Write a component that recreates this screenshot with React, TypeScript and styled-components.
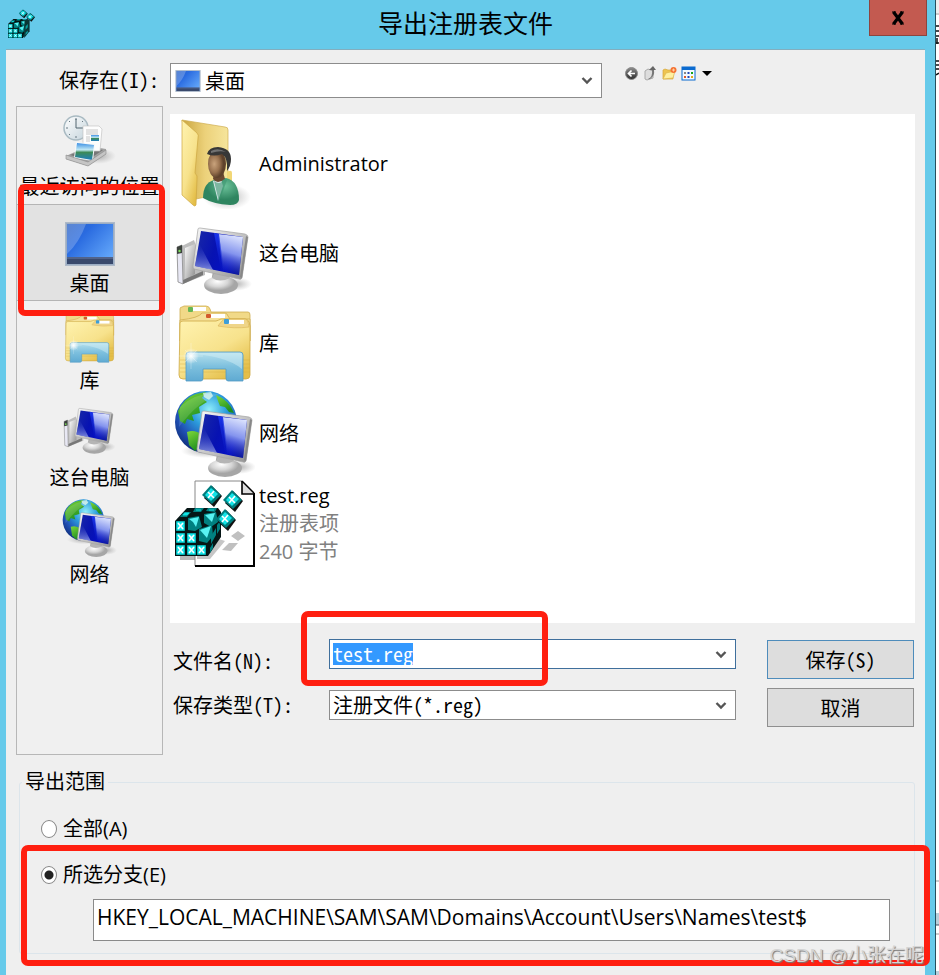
import React, { useEffect, useRef, useState } from "react";
import styled, { createGlobalStyle } from "styled-components";

const uiFont = `"Open Sans", "Noto Sans CJK SC", sans-serif`;
const songFont = `"Noto Sans Mono CJK SC", "Noto Sans CJK SC", monospace`;

const GlobalStyle = createGlobalStyle`
  * { box-sizing: border-box; }
  body { margin: 0; background: #fff; color: #000; font: 20px/28px ${uiFont}; }
  button, input, select { font: inherit; color: inherit; }
`;

const Screen = styled.div`
  display: flex;
  min-height: 100vh;
  position: relative;
  overflow: hidden;
`;

const Dialog = styled.main`
  flex: 1;
  display: flex;
  flex-direction: column;
  background: #66caea;
  border-right: 1px solid #24505f;
  padding: 0 10px 0 6px;
`;

const Behind = styled.svg`
  width: 3px;
  height: 975px;
  flex: none;
  display: block;
`;

const TitleBar = styled.header`
  display: grid;
  grid-template-columns: 58px 1fr 58px;
  height: 49px;
  align-items: start;
  svg { display: block; }
`;

const AppIcon = styled.span`
  padding: 9px 0 0 2px;
`;

const Title = styled.h1`
  margin: 0;
  font-size: 25px;
  line-height: 47px;
  font-weight: 400;
  text-align: center;
`;

const CloseButton = styled.button`
  width: 58px;
  height: 36px;
  margin-left: 2px;
  padding: 0;
  display: grid;
  place-items: center;
  background: #c35a50;
  border: 1px solid #8c453f;
  border-top: 0;
`;

const Body = styled.div`
  flex: 1;
  background: #efefef;
  border-top: 1px solid #83aebe;
  padding: 13px 10px 0;
`;

const AddressRow = styled.div`
  display: grid;
  grid-template-columns: 147px 24fr 17fr;
  column-gap: 7px;
  align-items: start;
`;

const AddressLabel = styled.label`
  font-family: ${songFont};
  line-height: 33px;
  text-align: right;
  padding-right: 4px;
`;

const ComboBox = styled.div<{ $tall?: boolean; $active?: boolean }>`
  position: relative;
  display: flex;
  align-items: center;
  height: ${(p) => (p.$tall ? 35 : 30)}px;
  background: #fff;
  border: 1px solid ${(p) => (p.$active ? "#3f6f9c" : "#8c8c8c")};
  padding-left: ${(p) => (p.$tall ? 4 : 3)}px;
  font-family: ${songFont};
  > svg { flex: none; }
`;

const Select = styled.select<{ $flush?: boolean }>`
  appearance: none;
  flex: 1;
  min-width: 0;
  height: 100%;
  border: 0;
  outline: 0;
  background: transparent;
  padding: 0 0 0 ${(p) => (p.$flush ? 0 : 4)}px;
`;

const NameInput = styled.input`
  flex: 1;
  min-width: 0;
  height: 22px;
  line-height: 22px;
  border: 0;
  outline: 0;
  padding: 0;
  background: transparent;
  &::selection { background: #3399ff; color: #fff; }
`;

const Chevron = styled.svg`
  width: 12px;
  height: 9px;
  margin: 0 8px 0 4px;
  pointer-events: none;
`;

const Tools = styled.div`
  display: flex;
  padding-left: 13px;
`;

const ToolButton = styled.button`
  width: 19px;
  height: 20px;
  padding: 0;
  border: 0;
  background: none;
  svg { display: block; margin: auto; }
`;

const Main = styled.div`
  display: grid;
  grid-template-columns: 147px 1fr;
  column-gap: 7px;
  margin-top: 8px;
`;

const Places = styled.nav`
  border: 1px solid #b7b7b7;
  background: #f0f0f0;
`;

const Place = styled.button<{ $selected?: boolean }>`
  position: relative;
  display: flex;
  flex-direction: column;
  align-items: center;
  width: 100%;
  height: 97px;
  padding: 8px 0 0;
  border: solid ${(p) => (p.$selected ? "#b5b5b5" : "transparent")};
  border-width: 1px 0;
  background: ${(p) => (p.$selected ? "#e2e2e2" : "transparent")};
  white-space: nowrap;
  line-height: 28px;
  > svg { flex: none; overflow: visible; }
`;

const Marker = styled.span<{ $box: string }>`
  position: absolute;
  inset: ${(p) => p.$box};
  border: 6px solid #ff1f10;
  border-radius: 7px;
  pointer-events: none;
  z-index: 2;
`;

const Content = styled.div`
  padding-top: 8px;
`;

const FileList = styled.ul`
  margin: 0;
  padding: 5px 5px 54px;
  list-style: none;
  background: #fff;
`;

const FileItem = styled.button`
  display: flex;
  align-items: center;
  gap: 4px;
  height: 90px;
  padding: 0;
  border: 0;
  background: none;
  text-align: left;
  > svg { flex: none; }
`;

const FileText = styled.span`
  display: grid;
`;

const FileMeta = styled.span`
  color: #808080;
`;

const SaveForm = styled.div`
  display: grid;
  grid-template-columns: 1fr 147px;
  column-gap: 31px;
  padding: 16px 1px 28px 3px;
`;

const Fields = styled.div`
  display: grid;
  grid-template-columns: 156px 1fr;
  align-items: start;
  align-content: start;
  row-gap: 21px;
`;

const FieldLabel = styled.label<{ $low?: boolean }>`
  font-family: ${songFont};
  line-height: 30px;
  padding-top: ${(p) => (p.$low ? 7 : 0)}px;
  margin-bottom: ${(p) => (p.$low ? -7 : 0)}px;
`;

const Actions = styled.div`
  display: grid;
  row-gap: 9px;
  padding-top: 1px;
  align-content: start;
`;

const ActionButton = styled.button<{ $primary?: boolean }>`
  height: 39px;
  padding: 0;
  background: #dddddd;
  border: 1px solid ${(p) => (p.$primary ? "#4e8cbb" : "#8f8f8f")};
  font-family: ${songFont};
`;

const Scope = styled.fieldset`
  position: relative;
  margin: 12px 0 0 3px;
  padding: 18px 24px 12px 21px;
  border: 1px solid #dce5eb;
  border-radius: 3px;
  legend { padding: 0 3px; line-height: 30px; margin-left: -19px; }
`;

const ScopeOption = styled.label`
  display: flex;
  align-items: center;
  gap: 6px;
  line-height: 28px;
  margin-bottom: 18px;
  & + & { margin-bottom: 10px; }
`;

const Radio = styled.input`
  appearance: none;
  width: 16px;
  height: 18px;
  margin: 0;
  border: 1px solid #868686;
  border-radius: 50%;
  background: #fff;
  &:checked { background: radial-gradient(circle, #222 0 4px, #fff 5px); }
`;

const BranchRow = styled.div`
  padding-left: 52px;
`;

const BranchInput = styled.input`
  display: block;
  width: 100%;
  height: 42px;
  border: 1px solid #8a8a8a;
  background: #fff;
  padding: 0 3px 6px;
  font-size: 21px;
`;

const Watermark = styled.div`
  position: absolute;
  right: 15px;
  bottom: 5px;
  z-index: 3;
  font: 19px/28px "Liberation Sans", "Noto Sans CJK SC", sans-serif;
  color: #d4d4d4;
  text-shadow: 1px 1px 1px #777;
`;

const GradientDefs = () => (
  <svg width="0" height="0" aria-hidden="true" display="block">
    <defs>
      <linearGradient id="gScreen" x1="0" y1="0.3" x2="1" y2="0.6">
        <stop offset="0" stopColor="#1726a8" /><stop offset=".4" stopColor="#0712b2" />
        <stop offset=".75" stopColor="#0510c4" /><stop offset="1" stopColor="#0a1484" />
      </linearGradient>
      <linearGradient id="gShine" x1=".8" y1="0" x2=".6" y2="1">
        <stop offset="0" stopColor="#e6ecff" /><stop offset=".5" stopColor="#8494ee" />
        <stop offset="1" stopColor="#0a18c0" stopOpacity=".3" />
      </linearGradient>
      <linearGradient id="gDim" x1="0" y1="0" x2="0" y2="1">
        <stop offset="0" stopColor="#2c3cc4" stopOpacity="0" /><stop offset="1" stopColor="#98a4e6" stopOpacity=".8" />
      </linearGradient>
      <linearGradient id="gBeam" x1="0" y1="0" x2="0" y2="1">
        <stop offset="0" stopColor="#1a36ee" /><stop offset="1" stopColor="#0c1cc0" stopOpacity=".2" />
      </linearGradient>
      <linearGradient id="gMetal" x1="0" y1="0" x2="1" y2="1">
        <stop offset="0" stopColor="#fafafa" /><stop offset=".5" stopColor="#c6c6c6" /><stop offset="1" stopColor="#8e8e8e" />
      </linearGradient>
      <radialGradient id="gBase" cx=".4" cy=".3">
        <stop offset="0" stopColor="#fff" /><stop offset=".6" stopColor="#d6d6d6" /><stop offset="1" stopColor="#a6a6a6" />
      </radialGradient>
      <radialGradient id="gShadow">
        <stop offset="0" stopColor="#777" stopOpacity=".6" /><stop offset="1" stopColor="#999" stopOpacity="0" />
      </radialGradient>
      <radialGradient id="gGlobe" cx=".55" cy=".3" r=".7">
        <stop offset="0" stopColor="#8eeefa" /><stop offset=".4" stopColor="#2c9cdc" />
        <stop offset=".75" stopColor="#2050b4" /><stop offset="1" stopColor="#10307e" />
      </radialGradient>
      <linearGradient id="gLand" x1="0" y1="0" x2=".5" y2="1">
        <stop offset="0" stopColor="#7ed83a" /><stop offset="1" stopColor="#1e8e1e" />
      </linearGradient>
      <linearGradient id="gFolder" x1="0" y1="0" x2=".7" y2="1">
        <stop offset="0" stopColor="#fff3b0" /><stop offset=".6" stopColor="#f7e28c" /><stop offset="1" stopColor="#e4be48" />
      </linearGradient>
      <linearGradient id="gBack" x1="0" y1="0" x2="1" y2="0">
        <stop offset="0" stopColor="#c9a53f" /><stop offset=".5" stopColor="#ecd17a" /><stop offset="1" stopColor="#f6e59c" />
      </linearGradient>
      <linearGradient id="gHolder" x1="0" y1="0" x2="0" y2="1">
        <stop offset="0" stopColor="#b9e2ee" /><stop offset=".5" stopColor="#7dc0de" /><stop offset="1" stopColor="#5faad2" />
      </linearGradient>
      <radialGradient id="gSpark">
        <stop offset="0" stopColor="#fff" /><stop offset="1" stopColor="#fff" stopOpacity="0" />
      </radialGradient>
      <radialGradient id="gFace" cx=".35" cy=".5">
        <stop offset="0" stopColor="#c9a37c" /><stop offset=".6" stopColor="#9a7350" /><stop offset="1" stopColor="#5f422c" />
      </radialGradient>
      <radialGradient id="gCoat" cx=".6" cy=".3">
        <stop offset="0" stopColor="#6cc29a" /><stop offset="1" stopColor="#2f8560" />
      </radialGradient>
      <linearGradient id="gDesk" x1="0" y1="0" x2="1" y2=".8">
        <stop offset="0" stopColor="#2b62c4" /><stop offset=".35" stopColor="#2a6be0" /><stop offset="1" stopColor="#64a8fa" />
      </linearGradient>
      <linearGradient id="gBall" x1="0" y1="0" x2="0" y2="1">
        <stop offset="0" stopColor="#8d8d8d" /><stop offset="1" stopColor="#2e2e2e" />
      </linearGradient>
      <linearGradient id="gClock" x1="0" y1="0" x2="1" y2="1">
        <stop offset="0" stopColor="#fff" /><stop offset="1" stopColor="#c4d4dc" />
      </linearGradient>
      <linearGradient id="gPhoto" x1="0" y1="0" x2="0" y2="1">
        <stop offset="0" stopColor="#3b8fe4" /><stop offset=".4" stopColor="#c2e9f5" />
        <stop offset=".55" stopColor="#3d8a56" /><stop offset="1" stopColor="#1f7fc0" />
      </linearGradient>
    </defs>
  </svg>
);

type IconProps = { width?: number; height?: number; viewBox?: string };
const frame = (p: IconProps) => ({
  width: p.width ?? 80,
  height: p.height ?? 90,
  viewBox: p.viewBox ?? "0 0 80 90",
  "aria-hidden": true as const,
});

const Monitor = () => (
  <g>
    <ellipse cx="60" cy="75" rx="17" ry="7" fill="url(#gShadow)" />
    <path d="M38 62L52 66L54 73H36Z" fill="#a9a9a9" />
    <ellipse cx="46" cy="76" rx="17" ry="9" fill="url(#gBase)" />
    <path d="M37 69Q45 74 55 69L53 65H39Z" fill="#b5b5b5" />
    <path d="M23 20Q23 19 25 19L70 25Q73 26 73 28L67 69Q66 71 64 70L19 60Q18 59 18 57Z" fill="url(#gMetal)" stroke="#a3a3a3" strokeWidth=".7" />
    <path d="M26 22L68 28L64 66L20 57Z" fill="url(#gScreen)" />
    <path d="M43 25L68 28L64 66L48 62Z" fill="url(#gShine)" />
    <path d="M24 34L38 61L20 57Z" fill="url(#gDim)" />
    <path d="M39 24L44 25L49 62L46 61Z" fill="url(#gBeam)" />
    <path d="M71 27L73 28L67 69L65 68Z" fill="#888" />
  </g>
);

const ComputerIcon = (p: IconProps) => (
  <svg {...frame(p)}>
    <path d="M7 37L19 31L30 62V66L8 75Z" fill="#bdbdbd" />
    <path d="M10 39L20 35V65L10 71Z" fill="url(#gMetal)" />
    <path d="M8 71L28 62V66L8 75Z" fill="#777" />
    <path d="M2 38L7 36L8 75L3 73Z" fill="#e8e8f4" stroke="#888" strokeWidth=".8" />
    <path d="M2 38L7 36V44L2 45Z" fill="#3d423d" />
    <circle cx="4.5" cy="42" r="1.2" fill="#7be05a" />
    <Monitor />
  </svg>
);

const NetworkIcon = (p: IconProps) => (
  <svg {...frame(p)}>
    <ellipse cx="32" cy="62" rx="26" ry="7" fill="url(#gShadow)" />
    <circle cx="31" cy="33" r="31" fill="url(#gGlobe)" />
    <g fill="url(#gLand)">
      <path d="M3 22Q10 8 21 5L31 3L27 9L32 13L24 18L25 24L17 26L19 32L12 30L10 35L5 32Z" />
      <path d="M12 43Q20 40 27 46L29 54L20 62L14 56Z" />
      <path d="M41 6Q54 11 59 24L54 23L50 18L45 17L43 12Z" />
    </g>
    <path d="M28 4L36 3L38 7L34 11L29 8Z" fill="#d8f6e8" opacity=".8" />
    <path d="M5 18Q22 2 45 5Q24 11 4 38Z" fill="#fff" opacity=".13" />
    <g transform="translate(4 3)"><Monitor /></g>
  </svg>
);

const LibraryIcon = (p: IconProps) => (
  <svg {...frame(p)}>
    <path d="M5 13V10Q5 8 7 8L9 7H31Q34 7 35 10L36 13H73Q75 13 75 16V42H5Z" fill="#f1d988" stroke="#cfad50" strokeWidth=".8" />
    <rect x="17" y="8" width="14" height="4" fill="#fff" /><rect x="13" y="8" width="5" height="5" rx="1" fill="#67b653" />
    <path d="M5 21Q24 19 27 14H50Q52 14 53 17L55 20H75V42H5Z" fill="#f5e19a" stroke="#cfad50" strokeWidth=".8" />
    <rect x="35" y="15" width="15" height="4" fill="#fff" /><rect x="31" y="15" width="5" height="4" rx="1" fill="#d45a2c" />
    <path d="M5 24Q5 22 8 22H41Q44 21 46 20H70Q73 20 74 23L75 27V76Q75 80 71 80H8Q4 80 4 76Z" fill="url(#gFolder)" stroke="#cda742" strokeWidth=".8" />
    <path d="M43 27Q48 20 50 20H70Q73 20 74 28Q60 30 43 27Z" fill="#efd588" stroke="#d8b456" strokeWidth=".6" />
    <rect x="53" y="21" width="16" height="4" fill="#fff" /><rect x="49" y="20" width="5" height="5" rx="1" fill="#3c9ed8" />
    <path d="M5 61H75M5 65H75M5 69H75M5 73H75" stroke="#d6ac3c" strokeWidth="1" opacity=".4" />
    <path d="M11 56Q11 53 14 53H65Q68 53 68 56V82H53Q51 82 51 79V70H28V79Q28 82 26 82H11Z" fill="url(#gHolder)" stroke="#519bc4" strokeWidth=".8" />
    <path d="M12 55Q50 56 67 70V56Q67 54 65 54H14Z" fill="#d4f0f6" opacity=".45" />
    <circle cx="16" cy="57" r="8" fill="url(#gSpark)" />
    <path d="M16 44V70M4 57H28M10 51L22 63M22 51L10 63" stroke="#fff" strokeWidth=".7" opacity=".4" />
  </svg>
);

const UserFolderIcon = (p: IconProps) => (
  <svg {...frame(p)}>
    <ellipse cx="52" cy="78" rx="24" ry="13" fill="url(#gShadow)" />
    <path d="M7 1L50 8Q53 8 53 11V71Q53 73 50 74L21 80Z" fill="url(#gBack)" stroke="#cfae52" strokeWidth=".7" />
    <path d="M52 53Q57 50 57 54V66H52" fill="#f2d776" />
    <path d="M7 1L22 14Q24 16 23 19L20 54Q23 57 22 60L21 86Q20 88 18 86L7 76Z" fill="url(#gFolder)" stroke="#cda742" strokeWidth=".7" />
    <path d="M28 79Q28 64 39 61L51 59Q64 62 64 81Q63 86 55 86Q38 85 28 79Z" fill="url(#gCoat)" />
    <path d="M38 62L43 82L48 67L46 60Z" fill="#dbe9ec" />
    <path d="M38 60Q42 66 50 60L48 53H39Z" fill="#6a4931" />
    <path d="M39 62Q45 67 49 60L52 61L44 83Z" fill="#3c9470" opacity=".6" />
    <ellipse cx="42" cy="45" rx="9" ry="14" fill="url(#gFace)" />
    <path d="M32 35Q34 28 43 28Q56 29 56 40Q56 47 52 52Q53 39 47 35Q39 38 32 35Z" fill="#373737" />
    <path d="M36 32Q43 28 51 33Q45 31 36 34Z" fill="#999" opacity=".6" />
  </svg>
);

const Cell = ({ x, y }: { x: number; y: number }) => (
  <g>
    <rect x={x} y={y} width="9" height="10" fill="#007c7c" />
    <rect x={x + 0.5} y={y + 0.5} width="8" height="9" fill="#13e4e8" />
    <path d={`M${x + 2} ${y + 2}L${x + 7} ${y + 8}M${x + 7} ${y + 2}L${x + 2} ${y + 8}`} stroke="#fff" strokeWidth="1.6" />
  </g>
);

const Gem = ({ x, y }: { x: number; y: number }) => (
  <g transform={`translate(${x} ${y})`}>
    <path d="M0 -9L10 1L2 12L-8 3Z" fill="#111" />
    <path d="M-1 -10L9 0L0 9L-10 0Z" fill="#007c7c" />
    <path d="M-1 -7L6 -1L-1 6L-7 0Z" fill="#13e4e8" />
    <path d="M-4 -3L2 3M2 -4L-4 3" stroke="#fff" strokeWidth="1.6" />
  </g>
);

const CubeStack = () => (
  <g>
    <path d="M0 42L12 29H43L46 33V58L33 77H0Z" fill="#051515" />
    <path d="M5 38L9 33H16L12 38ZM18 33L20 29H29L26 33ZM31 32L33 29H42L40 33Z" fill="#008080" />
    <path d="M8 36L10 34H14L12 36ZM21 31H26M34 31H39" fill="#1ee" stroke="#1dd" strokeWidth="1" />
    <Cell x={1} y={42} /><Cell x={1} y={54} /><Cell x={1} y={66} />
    <Cell x={12} y={54} /><Cell x={12} y={66} /><Cell x={22} y={66} />
    <path d="M13 39L24 37L27 48L20 52L13 51ZM29 35L41 33L43 43L36 48L29 44ZM24 50L37 46L38 57L32 64L24 62Z" fill="#008080" />
    <path d="M14 40L24 38L21 48L18 43ZM30 36L40 34L37 43ZM25 51L36 47L32 59Z" fill="#58f2f2" />
    <path d="M36 57L41 49V56L36 65ZM35 69L38 64V69L35 74ZM42 46L45 42V50L42 55Z" fill="#008080" />
  </g>
);

const RegFileIcon = (p: IconProps) => (
  <svg {...frame(p)}>
    <path d="M5 77H20V81H5Z" fill="#b8b8b8" />
    <path d="M20 2H67L79 14V87H20Z" fill="#fff" stroke="#888" />
    <path d="M79 14V87H20" fill="none" stroke="#000" strokeWidth="2" />
    <path d="M67 2V15H79" fill="#ddd" stroke="#000" strokeWidth="1.6" />
    <path d="M67 2L79 14" stroke="#000" strokeWidth="1.5" />
    <path d="M22 80L35 80L50 62L44 60L32 77H22Z" fill="#c6c6c6" />
    <path d="M47 71L54 64L63 64L56 72ZM56 57L63 52L70 57L63 62Z" fill="#c0c0c0" />
    <CubeStack />
    <Gem x={37} y={16} /><Gem x={58} y={21} /><Gem x={51} y={40} />
  </svg>
);

const RegAppIcon = () => (
  <svg width="27" height="29" viewBox="0 4 60 73" preserveAspectRatio="none" aria-hidden="true">
    <CubeStack />
    <path d="M37 32H48V60L36 77V50Z" fill="#0a3535" />
    <path d="M39 48L44 42V50L39 56ZM39 64L44 58V63L39 70Z" fill="#0a9c9c" />
    <Gem x={34} y={15} /><Gem x={50} y={24} />
  </svg>
);

const DesktopIcon = (p: IconProps) => (
  <svg width={p.width ?? 51} height={p.height ?? 57} viewBox={p.viewBox ?? "0 0 51 57"} aria-hidden="true">
    <rect x="1.5" y="9.500" width="49" height="43" fill="#9badc4" stroke="#aeb9c8" />
    <rect x="3" y="11" width="46" height="40" fill="url(#gDesk)" />
    <path d="M3 11H22Q15 30 3 41Z" fill="#fff" opacity=".22" />
    <rect x="3" y="44" width="46" height="7" fill="#39496c" />
    <path d="M3 45H49" stroke="#6b7fa8" />
  </svg>
);

const RecentIcon = () => (
  <svg width="51" height="57" viewBox="0 0 51 57" aria-hidden="true">
    <ellipse cx="34" cy="40" rx="18" ry="8" fill="url(#gShadow)" />
    <path d="M2 40L24 30L42 33V38L24 50L2 43Z" fill="#a2a2a2" />
    <path d="M6 39L24 32L39 34L24 44Z" fill="#777" />
    <circle cx="12" cy="12" r="12" fill="url(#gClock)" stroke="#a9bac2" strokeWidth="1.500" />
    <path d="M12 2V4M12 20V22M2 12H4M20 12H22M5 5L6 6M19 5L18 6M5 19L6 18" stroke="#687982" />
    <path d="M12 3V12H21" fill="none" stroke="#536771" />
    <path d="M19 10H35L38 13L36 35H19Z" fill="#fdfdfd" stroke="#c4c4c4" strokeWidth=".7" />
    <path d="M22 14H34M22 16H34M22 18H34M22 21H26M22 23H26M22 25H26" stroke="#b9b9b9" strokeWidth=".8" />
    <rect x="27" y="19" width="8" height="6" fill="url(#gPhoto)" />
    <path d="M12 26L31 28L29 45L10 42Z" fill="#f4f8fa" />
    <path d="M13 27L30 29L28 44L11 41Z" fill="url(#gPhoto)" />
    <path d="M2 39L24 46L42 34V38L24 50L2 43Z" fill="#c5c5c5" stroke="#8d8d8d" strokeWidth=".6" />
  </svg>
);

const ChevronDown = () => (
  <Chevron viewBox="0 0 12 9" aria-hidden="true">
    <path d="M1.500 2L6 6.500L10.500 2" fill="none" stroke="#555" strokeWidth="2.400" />
  </Chevron>
);

const tools = [
  { name: "后退", art: (
    <svg width="15" height="16" viewBox="0 0 15 16"><circle cx="7.500" cy="8.500" r="6" fill="url(#gBall)" stroke="#8c8c8c" /><path d="M11 8.500H5M7.500 5.500L4.500 8.500L7.500 11.500" fill="none" stroke="#fff" strokeWidth="1.700" /></svg>
  ) },
  { name: "向上一级", art: (
    <svg width="15" height="16" viewBox="0 0 15 16"><path d="M2 6L5 4L10 6V13L4 15L2 14Z" fill="#ddd" stroke="#aaa" /><path d="M5 14Q10 12 9 5H11Q12 11 7 14Z" fill="#777" /><path d="M6 5L10 1L13 5Z" fill="#666" /></svg>
  ) },
  { name: "新建文件夹", art: (
    <svg width="15" height="16" viewBox="0 0 15 16"><path d="M1 14V5L3 4L6 5H11V14Z" fill="#eec450" stroke="#d7a83a" strokeWidth=".7" /><path d="M1 14L4 8L13 6L11 13Z" fill="#fff0a0" stroke="#dcb54a" strokeWidth=".7" /><circle cx="11.500" cy="5" r="3" fill="#f57232" /><path d="M11.500 3.500V6.500M10 5H13" stroke="#ffd0a0" /></svg>
  ) },
  { name: "视图菜单", art: (
    <svg width="15" height="16" viewBox="0 0 15 16"><rect x="1" y="2" width="13" height="13" fill="#f3f9ff" stroke="#0b6bd0" /><rect x="1" y="2" width="13" height="3" fill="#0b6bd0" /><path d="M4 7V9" stroke="#888" strokeWidth="2" /><path d="M7.500 7V9M7.500 11V13" stroke="#2347b4" strokeWidth="2" /><path d="M11 7V9" stroke="#17a317" strokeWidth="2" /><path d="M4 11V13" stroke="#e05525" strokeWidth="2" /><path d="M11 11V13" stroke="#e3a81a" strokeWidth="2" /></svg>
  ) },
  { name: "更多视图", art: (
    <svg width="15" height="16" viewBox="0 0 15 16"><path d="M2 6H12L7 11Z" fill="#000" /></svg>
  ) },
];

const small = { width: 51, height: 57 };

const places = [
  { name: "最近访问的位置", icon: <RecentIcon /> },
  { name: "桌面", icon: <DesktopIcon />, selected: true },
  { name: "库", icon: <LibraryIcon {...small} viewBox="2 5 75 84" /> },
  { name: "这台电脑", icon: <ComputerIcon {...small} viewBox="2 17 74 83" /> },
  { name: "网络", icon: <NetworkIcon {...small} viewBox="2 9 76 85" /> },
];

const files = [
  { name: "Administrator", icon: <UserFolderIcon /> },
  { name: "这台电脑", icon: <ComputerIcon /> },
  { name: "库", icon: <LibraryIcon /> },
  { name: "网络", icon: <NetworkIcon /> },
  { name: "test.reg", icon: <RegFileIcon />, meta: ["注册表项", "240 字节"] },
];

export default function App() {
  const nameRef = useRef<HTMLInputElement>(null);
  const [scope, setScope] = useState("branch");

  useEffect(() => {
    nameRef.current?.focus();
    nameRef.current?.select();
  }, []);

  return (
    <Screen>
      <GlobalStyle />
      <Dialog>
        <GradientDefs />
        <TitleBar>
          <AppIcon><RegAppIcon /></AppIcon>
          <Title>导出注册表文件</Title>
          <CloseButton aria-label="关闭">
            <svg width="14" height="14" viewBox="0 0 14 14" aria-hidden="true">
              <path d="M2.500 1L11.500 13M11.500 1L2.500 13" stroke="#000" strokeWidth="3.200" />
              <path d="M1 1H5M9 1H13M1 13H5M9 13H13" stroke="#000" strokeWidth="1.200" />
            </svg>
          </CloseButton>
        </TitleBar>
        <Body>
          <AddressRow>
            <AddressLabel htmlFor="folder">保存在(I):</AddressLabel>
            <ComboBox $tall>
              <DesktopIcon width={26} height={22} viewBox="1 9 50 44" />
              <Select id="folder" defaultValue="桌面"><option>桌面</option></Select>
              <ChevronDown />
            </ComboBox>
            <Tools>
              {tools.map((t) => <ToolButton key={t.name} aria-label={t.name}>{t.art}</ToolButton>)}
            </Tools>
          </AddressRow>

          <Main>
            <Places>
              {places.map((p) => (
                <Place key={p.name} $selected={p.selected}>
                  {p.icon}
                  {p.name}
                  {p.selected && <Marker $box="-21px -3px -16px 1px" />}
                </Place>
              ))}
            </Places>
            <Content>
              <FileList>
                {files.map((f) => (
                  <li key={f.name}>
                    <FileItem>
                      {f.icon}
                      <FileText>
                        {f.name}
                        {f.meta?.map((m) => <FileMeta key={m}>{m}</FileMeta>)}
                      </FileText>
                    </FileItem>
                  </li>
                ))}
              </FileList>
              <SaveForm>
                <Fields>
                  <FieldLabel htmlFor="name" $low>文件名(N):</FieldLabel>
                  <ComboBox $active>
                    <NameInput id="name" ref={nameRef} defaultValue="test.reg" />
                    <ChevronDown />
                    <Marker $box="-29px 187px -18px -29px" />
                  </ComboBox>
                  <FieldLabel htmlFor="type">保存类型(T):</FieldLabel>
                  <ComboBox>
                    <Select $flush id="type" defaultValue="reg"><option value="reg">注册文件(*.reg)</option></Select>
                    <ChevronDown />
                  </ComboBox>
                </Fields>
                <Actions>
                  <ActionButton $primary>保存(S)</ActionButton>
                  <ActionButton>取消</ActionButton>
                </Actions>
              </SaveForm>
            </Content>
          </Main>

          <Scope>
            <legend>导出范围</legend>
            <ScopeOption>
              <Radio type="radio" name="scope" checked={scope === "all"} onChange={() => setScope("all")} />
              全部(A)
            </ScopeOption>
            <ScopeOption>
              <Radio type="radio" name="scope" checked={scope === "branch"} onChange={() => setScope("branch")} />
              所选分支(E)
            </ScopeOption>
            <BranchRow>
              <BranchInput aria-label="所选分支" defaultValue="HKEY_LOCAL_MACHINE\SAM\SAM\Domains\Account\Users\Names\test$" />
            </BranchRow>
            <Marker $box="48px -16px -13px 1px" />
          </Scope>
        </Body>
      </Dialog>
      <Behind viewBox="0 0 3 975" aria-hidden="true">
        <path d="M0 0H3V13H0Z" fill="#eee" />
        <path d="M0 14H3M0 881H3M0 934H3" stroke="#999" />
        <path d="M0 26H3M0 31H3M0 36H3M0 43H3M1 38V44M0 61H3M0 65H3M0 69H3M0 75L3 73" stroke="#111" strokeWidth="1.500" />
        <path d="M0 913H3V925H0Z" fill="#b9cfda" />
        <path d="M0 925H3" stroke="#456" />
        <path d="M0 971H3V975H0Z" fill="#b9cfda" />
      </Behind>
      <Watermark>CSDN @小张在呢</Watermark>
    </Screen>
  );
}
